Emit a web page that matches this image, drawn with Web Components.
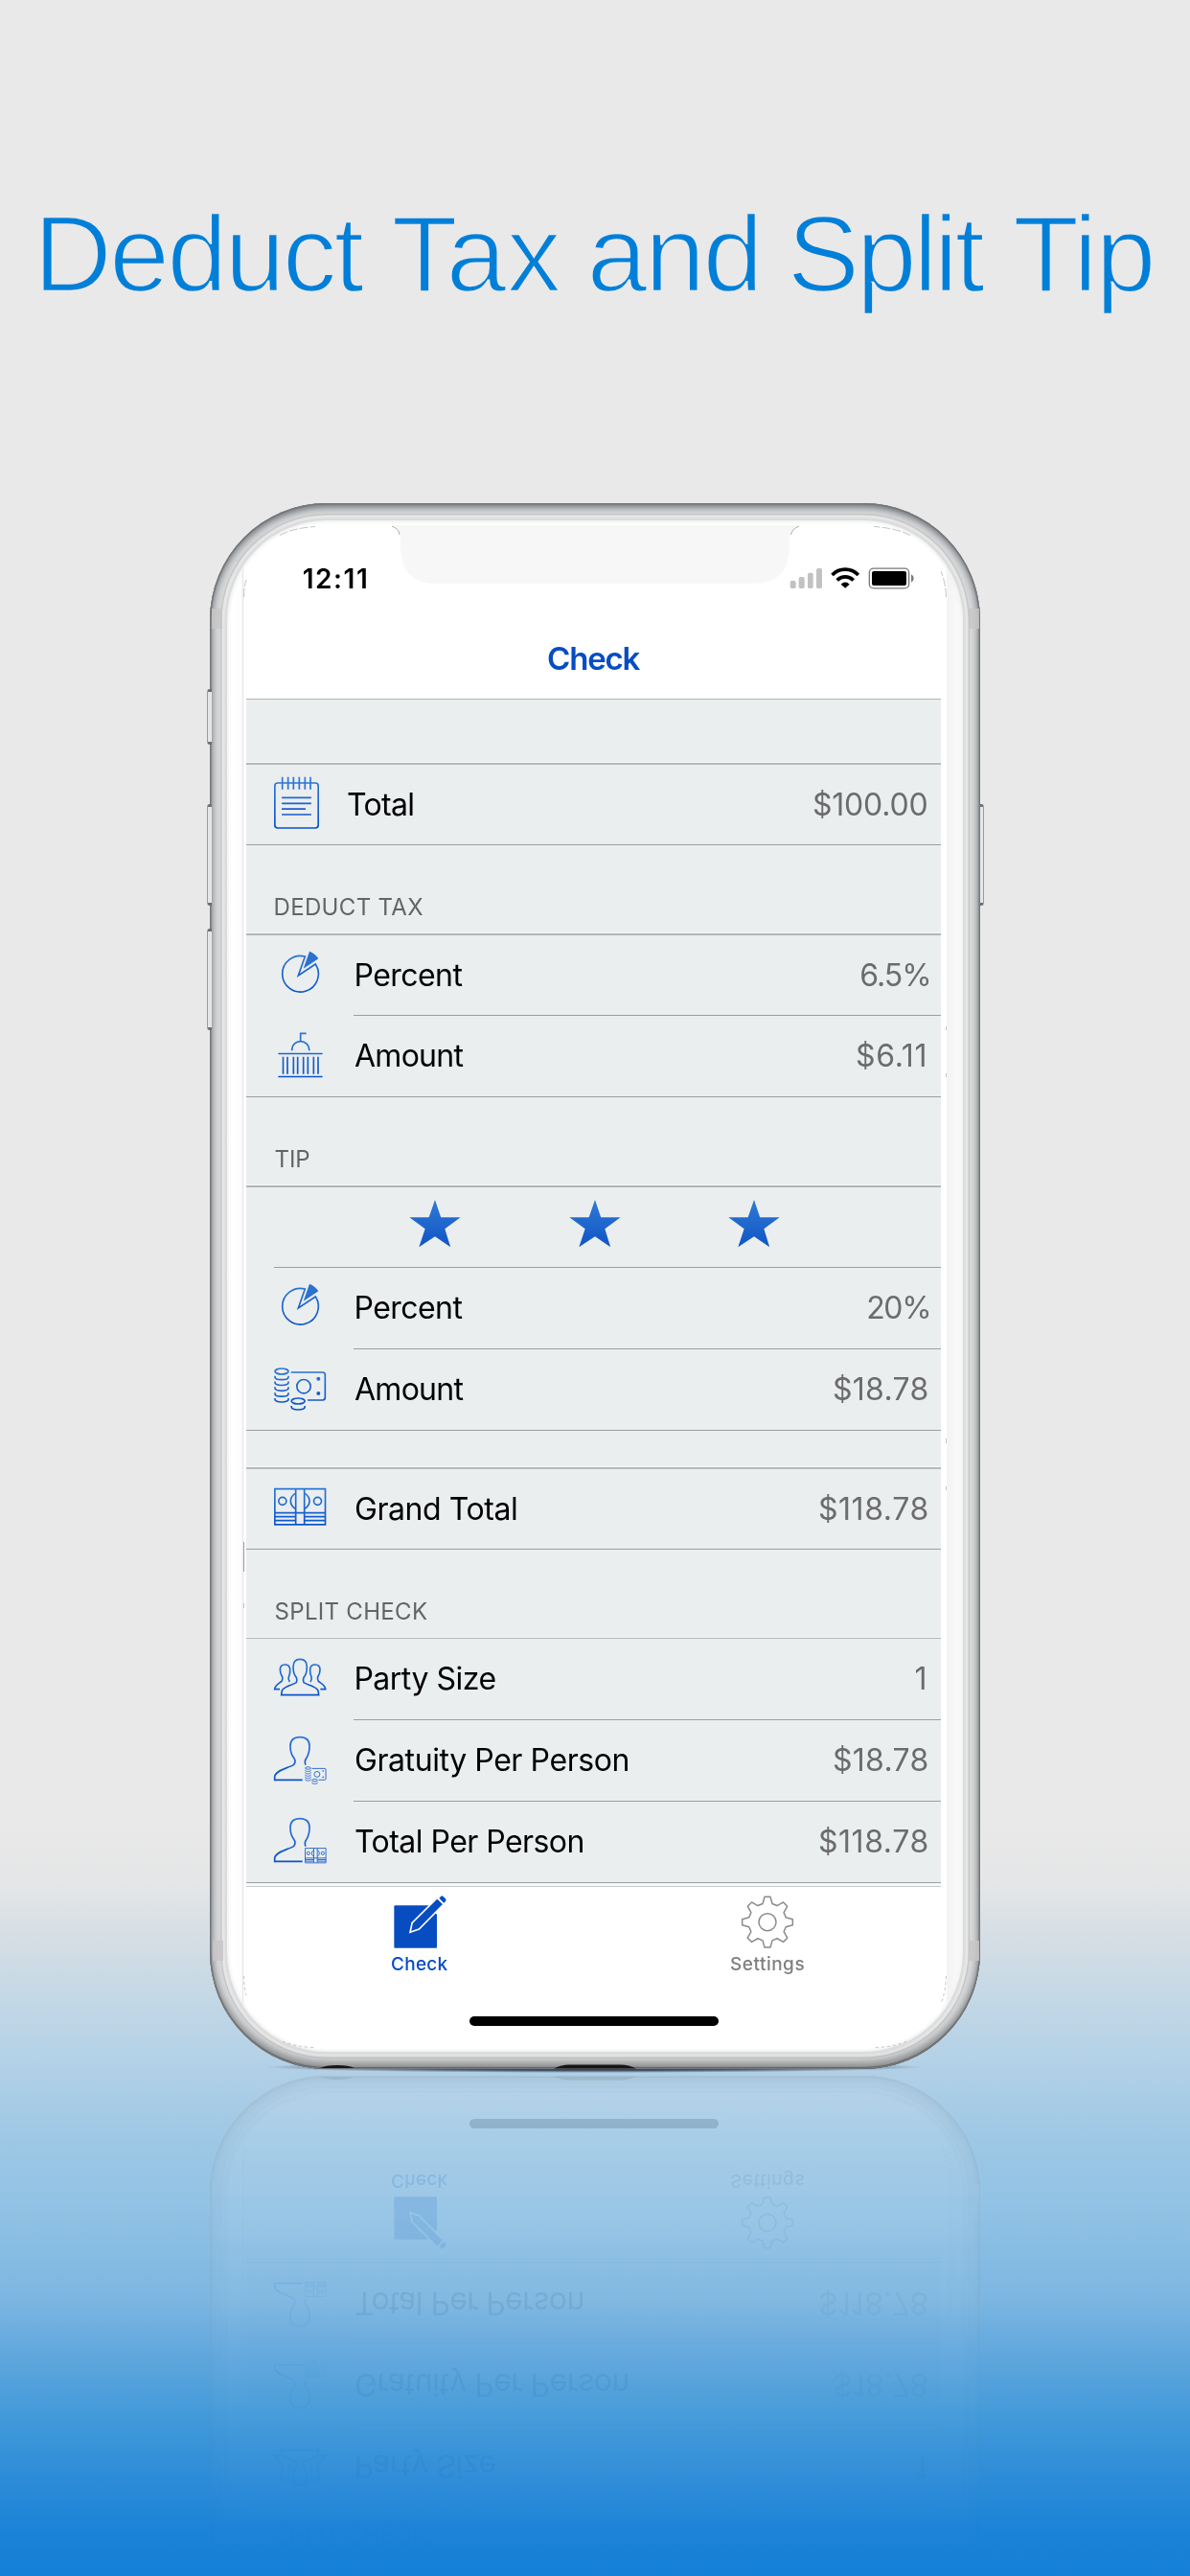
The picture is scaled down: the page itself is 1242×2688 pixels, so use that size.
<!DOCTYPE html>
<html lang="en">
<head>
<meta charset="utf-8">
<title>Deduct Tax and Split Tip</title>
<style>
  html, body { margin: 0; padding: 0; }
  body { width: 1242px; height: 2688px; overflow: hidden; font-family: Inter, "Liberation Sans", sans-serif; }
</style>
</head>
<body>
<promo-page>
  <promo-headline slot="headline">
    <fitted-text ink="335.5">Deduct</fitted-text>
    <fitted-text ink="174.5">Tax</fitted-text>
    <fitted-text ink="173">and</fitted-text>
    <fitted-text ink="201">Split</fitted-text>
    <fitted-text ink="143.5">Tip</fitted-text>
  </promo-headline>
  <phone-frame>
    <status-bar><fitted-text ink="65.3">12:11</fitted-text></status-bar>
    <nav-bar><fitted-text ink="96.5">Check</fitted-text></nav-bar>
    <list-gap style="--h:68px;--line:2px"></list-gap>
    <list-row icon="notepad" style="--h:84px;--indent:106px;--sep:0px">
      <fitted-text ink="68.3">Total</fitted-text>
      <fitted-text slot="value" ink="118.6">$100.00</fitted-text>
    </list-row>
    <section-header style="--line:2px"><fitted-text ink="153.6">DEDUCT TAX</fitted-text></section-header>
    <list-row icon="percent" style="--h:84px">
      <fitted-text ink="111" style="--lead:.4px">Percent</fitted-text>
      <fitted-text slot="value" ink="71" end="-1.7">6.5%</fitted-text>
    </list-row>
    <list-row icon="building" style="--sep:0px">
      <fitted-text ink="113.5" style="--lead:-1px">Amount</fitted-text>
      <fitted-text slot="value" ink="71.5" end="2">$6.11</fitted-text>
    </list-row>
    <section-header style="--line:2px"><fitted-text ink="35.6">TIP</fitted-text></section-header>
    <star-rating count="3"></star-rating>
    <list-row icon="percent">
      <fitted-text ink="111" style="--lead:.4px">Percent</fitted-text>
      <fitted-text slot="value" ink="63" end="-1.7">20%</fitted-text>
    </list-row>
    <list-row icon="coins" style="--sep:0px">
      <fitted-text ink="113.5" style="--lead:-1px">Amount</fitted-text>
      <fitted-text slot="value" ink="97.5">$18.78</fitted-text>
    </list-row>
    <list-gap style="--h:40px;--line:2px"></list-gap>
    <list-row icon="cash" style="--h:84px;--sep:0px">
      <fitted-text ink="168">Grand Total</fitted-text>
      <fitted-text slot="value" ink="112.6">$118.78</fitted-text>
    </list-row>
    <section-header style="--h:93px;--line:1px"><fitted-text ink="158.3">SPLIT CHECK</fitted-text></section-header>
    <list-row icon="party">
      <fitted-text ink="146" style="--lead:.4px">Party Size</fitted-text>
      <fitted-text slot="value" ink="10" end="2">1</fitted-text>
    </list-row>
    <list-row icon="gratuity">
      <fitted-text ink="284.5">Gratuity Per Person</fitted-text>
      <fitted-text slot="value" ink="97.5">$18.78</fitted-text>
    </list-row>
    <list-row icon="person-total" style="--sep:0px">
      <fitted-text ink="237.5">Total Per Person</fitted-text>
      <fitted-text slot="value" ink="112.6">$118.78</fitted-text>
    </list-row>
    <tab-bar>
      <tab-item icon="compose" active><fitted-text ink="58.7">Check</fitted-text></tab-item>
      <tab-item icon="gear"><fitted-text ink="77.3">Settings</fitted-text></tab-item>
    </tab-bar>
  </phone-frame>
</promo-page>

<script>
const define = (name, markup, setup) => {
  const tpl = document.createElement('template');
  tpl.innerHTML = markup;
  customElements.define(name, class extends HTMLElement {
    connectedCallback() {
      if (this.shadowRoot) return;
      this.attachShadow({ mode: 'open' }).append(tpl.content.cloneNode(true));
      if (setup) setup(this, this.shadowRoot);
    }
  });
};

/* Icon artwork. Three drawing units make one CSS pixel. */
const coinColumn = [827, 844.5, 862, 879.5, 897].map(y => `<path d="M261 ${y} v3 c0 5 9 9 21 9 s21 -4 21 -9 v-3"/>`).join('');
const coins = `<path d="M311 816 H410 q8 0 8 8 V895 q0 8 -8 8 H363"/><circle cx="351" cy="860" r="21.5"/>
  <circle cx="397" cy="836" r="6" fill="url(#g)" stroke="none"/><circle cx="397" cy="882" r="6" fill="url(#g)" stroke="none"/>
  <ellipse cx="282" cy="813" rx="21" ry="9"/>${coinColumn}
  <ellipse cx="333.500" cy="906" rx="21" ry="9"/><path d="M312.500 921 v3 c0 5 9 9 21 9 s21 -4 21 -9 v-3"/>`;
const cash = `<path d="M260.500 1181 H418.500 V1292.500 H260.500 Z M326 1181 V1292 M353 1181 V1292 M260 1256 H418 M260 1268 H326 M260 1280 H326 M353 1268 H418 M353 1280 H418"/>
  <circle cx="284.500" cy="1219" r="12"/><circle cx="394.500" cy="1219" r="12"/>
  <path d="M324 1195 Q310 1205 310 1219 T324 1243 M355 1195 Q369 1205 369 1219 T355 1243"/>`;
const person = `<path d="M357 725 C354 718 353 712 359 704 C367 692 369 683 369 666 C369 647 359 638 339 638 C319 638 309 647 309 666 C309 684 312 693 320 703 C327 713 325 718 320 724 C303 735 261 742 260 762 V772 H347"/>`;
const sideGuest = `<path d="M307 465 C303 459 302 455 304 450 C308 441 309 435 308 425 C307 415 301 411 292 411 C283 411 277 416 277 427 C277 440 281 444 284 449 C286 456 284 460 282 463 C276 469 262 472 260 488 H276"/>`;
const ICONS = {
  notepad: [54, `<rect x="260.500" y="111" width="136" height="141" rx="9"/><path d="M284 92 V131 M302 92 V131 M319 92 V131 M337 92 V131 M355 92 V131 M372 92 V131"/><path stroke-linecap="round" d="M284 157 H373 M284 175 H373 M284 192.500 H355 M284 210 H373"/>`],
  percent: [586, `<path d="M355 652 L334 712 L388 676 A56.500 56.500 0 1 1 355 652 Z"/><path d="M350 690 L369 636 Q386 642 397 659 Z" fill="#2b71d0" stroke="none"/>`],
  building: [840, `<path d="M314 949 V945 A27 25 0 0 1 368 945 V949 M341 920 V895 H359 M286.500 968 V1022 M300 968 V1022 M319 968 V1022 M332 968 V1022 M350 968 V1022 M364 968 V1022 M382 968 V1022 M396 968 V1022"/><path stroke-linecap="round" d="M273 958.500 H408 M273 1030.500 H408"/>`],
  coins: [744, coins],
  cash: [1119, cash],
  party: [330, `<path d="M339.500 394 C325 394 318 403 318 418 C318 435 321 444 328 451 C331 458 330 463 328 467 C318 474 290 478 283 492 L281 506 H398 L396 492 C389 478 361 474 351 467 C349 463 348 458 351 451 C358 444 361 435 361 418 C361 403 354 394 339.500 394 Z"/>${sideGuest}<g transform="translate(679 0) scale(-1 1)">${sideGuest}</g>`],
  gratuity: [585, `${person}<g transform="translate(355 730) scale(.41) translate(-259 -801)" stroke-width="7" opacity=".85">${coins}</g>`],
  'person-total': [585, `${person}<g transform="translate(355 730) scale(.41) translate(-259 -1179)" stroke-width="7" opacity=".85">${cash}</g>`]
};

define('promo-page', `<style>
  :host { display: flex; flex-direction: column; position: relative; width: 1242px; height: 2688px; overflow: hidden;
    background: linear-gradient(#e9e9e9 0, #e9e9e9 1900px, #e5e6e7 1965px, #d3dde4 2030px, #bdd5e6 2110px, #b1d0e7 2160px, #9ec8e5 2230px, #90c1e4 2310px, #7cb6e1 2400px, #5fa6dd 2460px, #439ad9 2520px, #2f8dd8 2580px, #1c83d7 2640px, #1480d8 2688px); }
  .shadow { position: absolute; left: 275px; top: 2151px; width: 690px; height: 12px; border-radius: 50%;
    background: radial-gradient(closest-side, rgba(20,30,40,.95), rgba(30,45,60,.75) 60%, rgba(40,60,80,0)); }
</style><slot name="headline"></slot><div class="shadow"></div><slot></slot>`);

define('promo-headline', `<style>
  :host { display: flex; box-sizing: border-box; height: 525px; padding: 205px 0 0 44px; gap: 31px;
    font: 400 113.500px/120px "Liberation Sans", sans-serif; color: #007fd9; -webkit-text-stroke: 2.500px #e9e9e9; }
  ::slotted(:nth-child(3)) { --lead: .5px; }
  ::slotted(:nth-child(4)) { --lead: 6px; }
  ::slotted(:nth-child(5)) { --lead: .5px; }
</style><slot></slot>`);

define('phone-frame', `<style>
  :host { display: block; position: relative; box-sizing: border-box; width: 804px; height: 1634px; margin-left: 219px; flex: none;
    padding: 23px 35px 20px 38px; border-radius: 122px;
    background: linear-gradient(90deg, #fff 22px, #fdfdfd 33px, #eaeaea 34.500px, #fff 36px, #fff 768px, #f3f3f3 770px, #fafafa 783px);
    box-shadow: inset 0 0 0 1.500px #74787c, inset 0 -2px 1px #4c4e50, inset 0 5px 8px -2px #6b6f72, inset 0 -9px 9px -2px #909192,
      inset 0 0 8px 1px #85898c, inset 0 0 0 11px #d6d8da, inset 0 0 0 12.500px #c6c7c8, inset 0 0 0 15.500px #e6e6e6, inset 0 0 0 18px #dbdcdc, inset 0 0 3px 20px #f1f1f1;
    -webkit-box-reflect: below 7px linear-gradient(transparent 68%, rgba(0,0,0,.045) 84%, rgba(0,0,0,.09) 92%, rgba(0,0,0,.12)); }
  .key { position: absolute; box-sizing: border-box; width: 5px; border: 1px solid #999c9e; border-top: 3px solid #6d7072; border-bottom: 3px solid #6d7072; background: #e5e6e7; }
  .l { left: -3px; border-right: 0; border-radius: 3px 0 0 3px; }
  .r { right: -4px; border-left-color: #77797c; border-radius: 0 3px 3px 0; }
  .band { position: absolute; width: 11px; height: 21px; background: rgba(200,198,198,.8); }
  .glass { position: absolute; left: 35.500px; top: 23px; width: 733px; height: 1590px; border-radius: 88px; background: #fff; }
  .marks { position: absolute; left: 0; top: 0; width: 804px; height: 1634px; }
  .screen { position: relative; display: flex; flex-direction: column; width: 725px; height: 1590px; }
</style>
<i class="key l" style="top:194px;height:58px"></i><i class="key l" style="top:314px;height:106px"></i><i class="key l" style="top:444px;height:106px"></i>
<i class="key r" style="top:314px;height:106px"></i>
<div class="glass"></div>
<i class="band" style="left:2px;top:110px"></i><i class="band" style="right:1px;top:110px"></i><i class="band" style="left:3px;top:1500px"></i><i class="band" style="right:1px;top:1500px"></i>
<svg class="marks" viewBox="219 525 804 1634" fill="none" stroke="#aaa" stroke-width=".7">
  <path d="M407 548 Q418 548 418 566 V572 Q419 609 456 609 H786 Q824 609 824 570 V566 Q824 548 836 548 Z" fill="#f7f7f7" stroke="none"/>
  <path stroke="#888" d="M409 549.300 Q416 551 417 558 M834 549.300 Q827 551 825.500 558"/>
  <path stroke-dasharray="9 2" d="M292 558.500 Q306 551 329 549.500 M950 558.500 Q935 551 912 549.500 M254.500 623 Q254.500 612 257 605 M987.500 623 Q987 608 982 596"/>
  <path stroke-dasharray="3 3" d="M254.500 2062 Q254.500 2072 257 2082 M987.500 2062 Q987 2078 982 2091 M295 2130 Q308 2136 328 2136.500 M946 2130 Q934 2136 913 2136.500"/>
  <path d="M987.500 1071 V1075 M987.500 1120 V1124 M987.500 1501 V1506 M987.500 1551 V1555 M254.500 1673 V1678"/>
  <path d="M254.500 1609 V1640" stroke="#777"/>
  <path d="M334 2158 Q340 2155 352 2155 T370 2158 Z M578 2158.500 Q586 2154.500 594 2154.500 H648 Q656 2154.500 664 2158.500 Z" fill="#161616" stroke="none"/>
</svg>
<div class="screen"><slot></slot></div>`);

define('status-bar', `<style>
  :host { display: flex; align-items: center; box-sizing: border-box; height: 97px; padding: 14px 28px 0 59.700px; font: 600 28px/34px Inter, sans-serif; color: #000; }
  svg { margin-left: auto; width: 130px; height: 28px; }
</style><slot></slot>
<svg viewBox="612 240 390 84" fill="none">
  <g fill="#c2c2c2"><rect x="614" y="288" width="18" height="24" rx="5"/><rect x="641" y="276" width="18" height="36" rx="5"/><rect x="669" y="263" width="17" height="49" rx="5"/><rect x="696" y="249" width="18" height="63" rx="5"/></g>
  <path d="M745.500 270 Q763 252.500 786.500 252.500 T827.500 270 M761 286.500 Q772 275.500 786.500 275.500 T812 286.500" stroke="#000" stroke-width="11"/>
  <path d="M786.500 311 L773 299 Q786.500 286 800 299 Z" fill="#000"/>
  <rect x="862" y="249.500" width="124" height="62" rx="13" stroke="#7a7a7a" stroke-width="4"/><rect x="870" y="258" width="108" height="45" rx="6" fill="#000"/>
  <path d="M993 268 Q1001 272 1001 280.500 T993 293 Z" fill="#7a7a7a"/>
</svg>`);

define('nav-bar', `<style>
  :host { display: flex; justify-content: center; box-sizing: border-box; height: 85px; padding: 22px 0 0 1.500px; border-bottom: 1px solid #b1b6b7; font: 600 33px/40px Inter, sans-serif; color: #074dc1; }
</style><slot></slot>`);

define('list-gap', `<style>
  :host { display: block; box-sizing: border-box; height: var(--h); background: #ebeeef; border-bottom: var(--line) solid #b5b9ba; box-shadow: inset 0 -1px #f8fafa; }
</style>`);

define('section-header', `<style>
  :host { display: block; box-sizing: border-box; height: var(--h, 94px); padding: 49.500px 0 0 30.600px; background: #ebeeef; border-bottom: var(--line) solid #b1b5b6; box-shadow: inset 0 -1px #f6f8f8; font: 400 24px/30px Inter, sans-serif; color: #646467; }
</style><slot></slot>`);

define('list-row', `<style>
  :host { display: flex; align-items: center; position: relative; box-sizing: border-box; height: var(--h, 85px); padding: 0 14.500px 1px 27px; background: #ebeeef; font: 400 32px/40px Inter, sans-serif; color: #000; }
  svg { flex: none; width: 60px; height: 84px; }
  .label { flex: 1; padding-left: calc(var(--indent, 114px) - 87px); }
  .value { color: #6c6c6c; }
  .rule { position: absolute; left: var(--sep, 112px); right: 0; bottom: 0; height: 1px; background: #9b9fa1; }
</style>
<svg fill="none" stroke="url(#g)" stroke-width="5"></svg>
<div class="label"><slot></slot></div><div class="value"><slot name="value"></slot></div><div class="rule"></div>`,
(host, root) => {
  const [top, art] = ICONS[host.getAttribute('icon')];
  const svg = root.querySelector('svg');
  svg.setAttribute('viewBox', `252 ${top} 180 252`);
  svg.innerHTML = `<defs><linearGradient id="g" gradientUnits="userSpaceOnUse" x1="0" x2="0" y1="${top + 40}" y2="${top + 200}"><stop stop-color="#3079d6"/><stop offset="1" stop-color="#0650c8"/></linearGradient></defs>${art}`;
});

define('star-rating', `<style>
  :host { display: flex; justify-content: center; gap: 112.800px; position: relative; box-sizing: border-box; height: 84px; padding: 12px 0 0 2px; background: #ebeeef; }
  svg { width: 54px; height: 52px; }
  .rule { position: absolute; left: 29px; right: 0; bottom: 0; height: 1px; background: #9b9fa1; }
</style><div class="rule"></div>`, (host, root) => {
  for (let i = 0; i < +host.getAttribute('count'); i++) {
    root.querySelector('.rule').insertAdjacentHTML('beforebegin', `<svg viewBox="680 273 162 156"><defs><linearGradient id="s" x1="0" x2="0" y1="0" y2="1"><stop stop-color="#3079d6"/><stop offset="1" stop-color="#1055c5"/></linearGradient></defs><path fill="url(#s)" d="M761 276 L779.500 331 H841 L792 367 L809.500 424 L761 391 L711 424 L730 367 L681 331 H742 Z"/></svg>`);
  }
});

define('tab-bar', `<style>
  :host { display: block; position: relative; }
  .edge { height: 4px; box-sizing: border-box; background: #f6f9f9; border-bottom: 1px solid #c6cccc; }
  .tabs { display: flex; height: 134.500px; }
  ::slotted(*) { flex: 1; }
  .home { width: 259.500px; height: 10px; margin-left: 233px; border-radius: 5px; background: #000; }
</style><div class="edge"></div><div class="tabs"><slot></slot></div><div class="home"></div>`);

define('tab-item', `<style>
  :host { display: flex; flex-direction: column; align-items: center; padding-top: 8px; font: 500 19px/24px Inter, sans-serif; color: #7f7f7f; }
  :host([active]) { color: #074dc1; }
  svg { width: 58px; height: 58px; margin-bottom: 3px; }
</style><svg></svg><slot></slot>`, (host, root) => {
  const svg = root.querySelector('svg');
  if (host.getAttribute('icon') === 'compose') {
    svg.setAttribute('viewBox', '628 140 174 174');
    svg.innerHTML = `<rect x="635" y="173.500" width="134" height="133.500" rx="3" fill="#074dc1"/><path d="M742 170 L769 148 L794 173 L770 203 L755 190 Z" fill="#fff"/><path d="M685 258 L691.500 228 L770 150 L790 170 L713 248 Z" fill="#074dc1" stroke="#fff" stroke-width="5"/><path d="M776 151 L781 146 Q785 142 789 146 L796 153 Q800 157 796 161 L791 166 Z" fill="#074dc1"/>`;
  } else {
    svg.setAttribute('viewBox', '456 140 174 174');
    const pts = [];
    for (let i = 0; i < 8; i++) {
      const a = i * Math.PI / 4, c = Math.cos(a), s = Math.sin(a);
      for (const [x, y] of [[-15, -57.5], [-9, -79], [9, -79], [15, -57.5]]) pts.push([543 + x * c - y * s, 226 + x * s + y * c].map(n => n.toFixed(1)).join(' '));
    }
    svg.innerHTML = `<g fill="none" stroke="#8a8a8a" stroke-width="4.500" stroke-linejoin="round"><path d="M${pts.join('L')}Z"/><circle cx="543" cy="226" r="27"/></g>`;
  }
});

/* Spaces its letters so that the drawn glyphs span exactly the width in "ink". */
const pen = document.createElement('canvas').getContext('2d');
define('fitted-text', `<style>:host { display: inline-block; white-space: pre; flex: none; }</style><slot></slot>`, host => {
  const text = host.textContent, target = +host.getAttribute('ink'), cs = getComputedStyle(host);
  pen.font = `${cs.fontWeight} ${cs.fontSize} ${cs.fontFamily}`;
  const m = pen.measureText(text), ink = m.actualBoundingBoxLeft + m.actualBoundingBoxRight;
  const gap = text.length > 1 ? (target - ink) / (text.length - 1) : 0;
  host.style.letterSpacing = gap + 'px';
  host.style.marginRight = (m.actualBoundingBoxRight - m.width - gap + +(host.getAttribute('end') || 0)) + 'px';
  host.style.marginLeft = `calc(${m.actualBoundingBoxLeft}px + var(--lead, 0px))`;
});
</script>
</body>
</html>
